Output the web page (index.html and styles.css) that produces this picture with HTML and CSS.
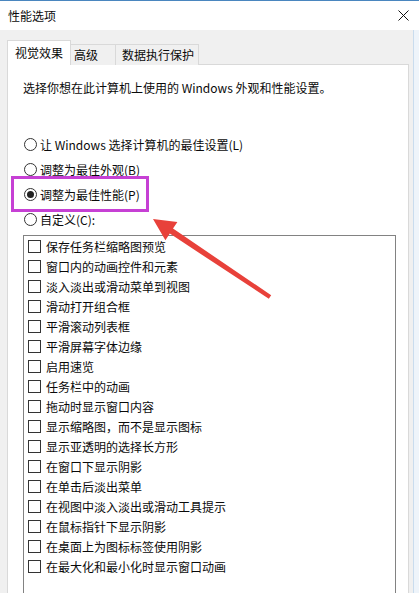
FILE: index.html
```html
<!DOCTYPE html>
<html lang="zh-CN">
<head>
<meta charset="utf-8">
<title>性能选项</title>
<link rel="stylesheet" href="styles.css">
</head>
<body>
<div class="window">
  <div class="titlebar">
    <span class="title">性能选项</span>
    <svg class="close" width="11" height="11" viewBox="0 0 11 11"><path d="M0.5 0.5 L10.5 10.5 M10.5 0.5 L0.5 10.5" stroke="#111" stroke-width="1" fill="none"/></svg>
  </div>
  <div class="content">
    <div class="tabs">
      <div class="tab tab-active">视觉效果</div>
      <div class="tab tab-adv">高级</div>
      <div class="tab tab-dep">数据执行保护</div>
    </div>
    <div class="panel">
      <p class="desc">选择你想在此计算机上使用的 Windows 外观和性能设置。</p>
      <div class="radios">
        <div class="radio-row"><span class="radio"></span><span>让 Windows 选择计算机的最佳设置(L)</span></div>
        <div class="radio-row"><span class="radio"></span><span>调整为最佳外观(B)</span></div>
        <div class="radio-row"><span class="radio radio-on"></span><span>调整为最佳性能(P)</span></div>
        <div class="radio-row"><span class="radio"></span><span>自定义(C):</span></div>
      </div>
      <div class="listbox">
        <div class="item"><span class="check"></span><span>保存任务栏缩略图预览</span></div>
        <div class="item"><span class="check"></span><span>窗口内的动画控件和元素</span></div>
        <div class="item"><span class="check"></span><span>淡入淡出或滑动菜单到视图</span></div>
        <div class="item"><span class="check"></span><span>滑动打开组合框</span></div>
        <div class="item"><span class="check"></span><span>平滑滚动列表框</span></div>
        <div class="item"><span class="check"></span><span>平滑屏幕字体边缘</span></div>
        <div class="item"><span class="check"></span><span>启用速览</span></div>
        <div class="item"><span class="check"></span><span>任务栏中的动画</span></div>
        <div class="item"><span class="check"></span><span>拖动时显示窗口内容</span></div>
        <div class="item"><span class="check"></span><span>显示缩略图，而不是显示图标</span></div>
        <div class="item"><span class="check"></span><span>显示亚透明的选择长方形</span></div>
        <div class="item"><span class="check"></span><span>在窗口下显示阴影</span></div>
        <div class="item"><span class="check"></span><span>在单击后淡出菜单</span></div>
        <div class="item"><span class="check"></span><span>在视图中淡入淡出或滑动工具提示</span></div>
        <div class="item"><span class="check"></span><span>在鼠标指针下显示阴影</span></div>
        <div class="item"><span class="check"></span><span>在桌面上为图标标签使用阴影</span></div>
        <div class="item"><span class="check"></span><span>在最大化和最小化时显示窗口动画</span></div>
      </div>
    </div>
  </div>
  <div class="highlight"></div>
  <svg class="arrow" width="419" height="593" viewBox="0 0 419 593">
    <polygon points="153,219 177.4,221.9 173,228.6 271.2,295.2 268.8,298.8 169.8,233.6 165.4,240.3" fill="#e8413a"/>
  </svg>
</div>
</body>
</html>
```
FILE: styles.css
```css
* { box-sizing: border-box; }
html, body { margin: 0; padding: 0; }
body {
  font-family: "Noto Sans CJK SC", "Noto Sans", sans-serif;
  font-size: 12px;
  color: #0a0a0a;
  background: #f0f0f0;
}
.window {
  position: relative;
  width: 419px;
  height: 593px;
  overflow: hidden;
  background: #f0f0f0;
}
.titlebar {
  height: 30px;
  background: #fff;
  border-top: 1px solid #4a86bf;
  display: flex;
  align-items: center;
  justify-content: space-between;
  padding: 0 10px 0 8px;
}
.title { line-height: 16px; }
.close { display: block; }
.content {
  height: 563px;
  padding-top: 10px;
  background: linear-gradient(to right, #f0f0f0 413px, #c9dcee 413px, #c9dcee 414px, #eef4fa 414px);
}
.tabs {
  display: flex;
  align-items: flex-end;
  padding-left: 7px;
  height: 25px;
  position: relative;
  z-index: 1;
}
.tab {
  height: 21px;
  line-height: 20px;
  border: 1px solid #d9d9d9;
  border-bottom: none;
  background: #f0f0f0;
  white-space: nowrap;
}
.tab-active {
  height: 25px;
  line-height: 23px;
  width: 64px;
  background: #fff;
  padding-left: 7px;
}
.tab-adv {
  width: 45px;
  padding-left: 3px;
  border-left: none;
}
.tab-dep {
  width: 83px;
  padding-left: 6px;
  border-left: none;
}
.panel {
  margin: -1px 10px 0 7px;
  height: 600px;
  background: #fff;
  border: 1px solid #d9d9d9;
  padding: 15px 12px 0 15px;
}
.desc {
  margin: 0;
  line-height: 16px;
}
.radios {
  margin-top: 36px;
}
.radio-row {
  height: 25px;
  display: flex;
  align-items: center;
  gap: 3px;
  padding-left: 1px;
}
.radio {
  width: 13px;
  height: 13px;
  border: 1px solid #333;
  border-radius: 50%;
  display: flex;
  align-items: center;
  justify-content: center;
  flex: none;
}
.radio-on::after {
  content: "";
  width: 7px;
  height: 7px;
  border-radius: 50%;
  background: #222;
}
.listbox {
  margin-top: 3px;
  height: 400px;
  border: 1px solid #828282;
}
.item {
  height: 20px;
  display: flex;
  align-items: center;
  gap: 5px;
  padding-left: 4px;
}
.check {
  width: 13px;
  height: 13px;
  border: 1px solid #333;
  flex: none;
}
.highlight {
  position: absolute;
  left: 11px;
  top: 176px;
  width: 138px;
  height: 36px;
  border: 3px solid #c640d4;
}
.arrow {
  position: absolute;
  left: 0;
  top: 0;
}
```
